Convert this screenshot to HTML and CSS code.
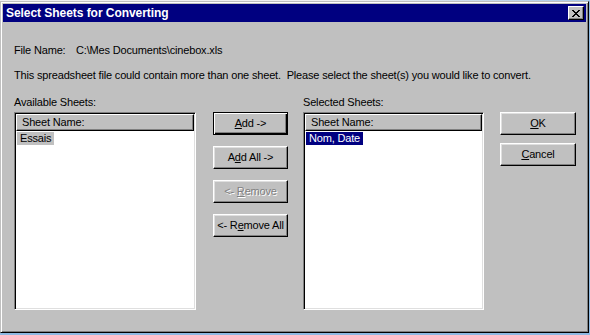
FILE: index.html
```html
<!DOCTYPE html>
<html lang="en">

<head>
    <meta charset="UTF-8">
    <title>Select Sheets for Converting</title>
    <link rel="stylesheet" href="styles.css">
</head>

<body class="desktop">
    <div class="strip"></div>
    <div class="window">
        <div class="titlebar">
            <span class="title">Select Sheets for Converting</span>
            <button class="close" title="Close">
                <svg width="8" height="7" viewBox="0 0 8 7">
                    <path d="M0 0h2v1h1v1h2V1h1V0h2v1H7v1H6v1H5v1h1v1h1v1h1v1H6V6H5V5H3v1H2v1H0V6h1V5h1V4h1V3H2V2H1V1H0z" fill="#000" />
                </svg>
            </button>
        </div>
        <div class="content">
            <div class="line"><span class="label">File Name:</span>C:\Mes Documents\cinebox.xls</div>
            <div class="line info">This spreadsheet file could contain more than one sheet.&nbsp; Please select the sheet(s) you would like to convert.</div>

            <div class="main">
                <div class="column left">
                    <div class="line">Available Sheets:</div>
                    <div class="listbox">
                        <div class="header">Sheet Name:</div>
                        <div class="item"><span class="inactive">Essais</span></div>
                    </div>
                </div>

                <div class="buttons">
                    <button class="btn default"><u>A</u>dd -&gt;</button>
                    <button class="btn">A<u>d</u>d All -&gt;</button>
                    <button class="btn disabled">&lt;- <u>R</u>emove</button>
                    <button class="btn">&lt;- R<u>e</u>move All</button>
                </div>

                <div class="column right">
                    <div class="line">Selected Sheets:</div>
                    <div class="listbox">
                        <div class="header">Sheet Name:</div>
                        <div class="item"><span class="selected">Nom, Date</span></div>
                    </div>
                </div>

                <div class="buttons actions">
                    <button class="btn"><u>O</u>K</button>
                    <button class="btn"><u>C</u>ancel</button>
                </div>
            </div>
        </div>
    </div>
</body>

</html>
```

FILE: styles.css
```css
* {
    margin: 0;
    padding: 0;
    box-sizing: border-box;
}

.desktop {
    background: #8db9e2;
    font-family: "Liberation Sans", Arial, sans-serif;
    font-size: 11px;
    line-height: 13px;
    letter-spacing: -0.17px;
    color: #000;
    width: 590px;
    height: 335px;
    overflow: hidden;
}

.strip {
    height: 1px;
    background: linear-gradient(to right, #f0f0f0 0, #f0f0f0 60%, #a9c9e8 100%);
}

.window {
    width: 589px;
    height: 332px;
    background: #c0c0c0;
    border: 1px solid;
    border-color: #c0c0c0 #000 #000 #c0c0c0;
    box-shadow: inset 1px 1px #fff, inset -1px -1px #808080;
    padding: 2px;
    display: flex;
    flex-direction: column;
}

.titlebar {
    height: 18px;
    background: #000080;
    display: flex;
    align-items: center;
    justify-content: space-between;
    padding: 0 2px 0 3px;
}

.title {
    color: #fff;
    font-weight: bold;
    font-size: 12px;
    letter-spacing: -0.05px;
}

.close {
    width: 16px;
    height: 14px;
    background: #c0c0c0;
    border: 1px solid;
    border-color: #fff #000 #000 #fff;
    box-shadow: inset -1px -1px #808080;
    display: flex;
    align-items: center;
    justify-content: center;
    padding-right: 1px;
}

.content {
    padding: 22px 0 0 11px;
}

.label {
    display: inline-block;
    width: 62px;
}

.info {
    margin-top: 12px;
}

.main {
    display: flex;
    align-items: flex-start;
    margin-top: 14px;
}

.column .line {
    margin-bottom: 3px;
}

.left {
    width: 182px;
    margin-right: 17px;
}

.right {
    width: 181px;
    margin-right: 16px;
}

.listbox {
    height: 198px;
    background: #fff;
    border: 1px solid;
    border-color: #808080 #fff #fff #808080;
    box-shadow: inset 1px 1px #000, inset -1px -1px #dfdfdf;
    padding: 1px;
}

.header {
    height: 17px;
    background: #c0c0c0;
    border: 1px solid;
    border-color: #fff #000 #000 #fff;
    box-shadow: inset -1px -1px #808080;
    padding: 1px 0 0 5px;
}

.item {
    padding: 1px 0 0 1px;
}

.item span {
    display: inline-block;
    padding: 0 3px;
    height: 13px;
}

.inactive {
    background: #c0c0c0;
}

.selected {
    background: #000080;
    color: #fff;
}

.buttons {
    display: flex;
    flex-direction: column;
    gap: 11px;
    width: 75px;
    margin-top: 16px;
    margin-right: 15px;
}

.actions {
    width: 76px;
    gap: 8px;
    margin-right: 0;
}

.btn {
    height: 23px;
    background: #c0c0c0;
    font: inherit;
    letter-spacing: inherit;
    color: #000;
    border: 1px solid;
    border-color: #fff #000 #000 #fff;
    box-shadow: inset -1px -1px #808080, inset 1px 1px #dfdfdf;
}

.btn.default {
    border-color: #000;
    box-shadow: inset 1px 1px #fff, inset -1px -1px #000, inset -2px -2px #808080;
}

.btn.disabled {
    color: #808080;
    text-shadow: 1px 1px #fff;
}

.btn u {
    text-underline-offset: 1px;
}
```
